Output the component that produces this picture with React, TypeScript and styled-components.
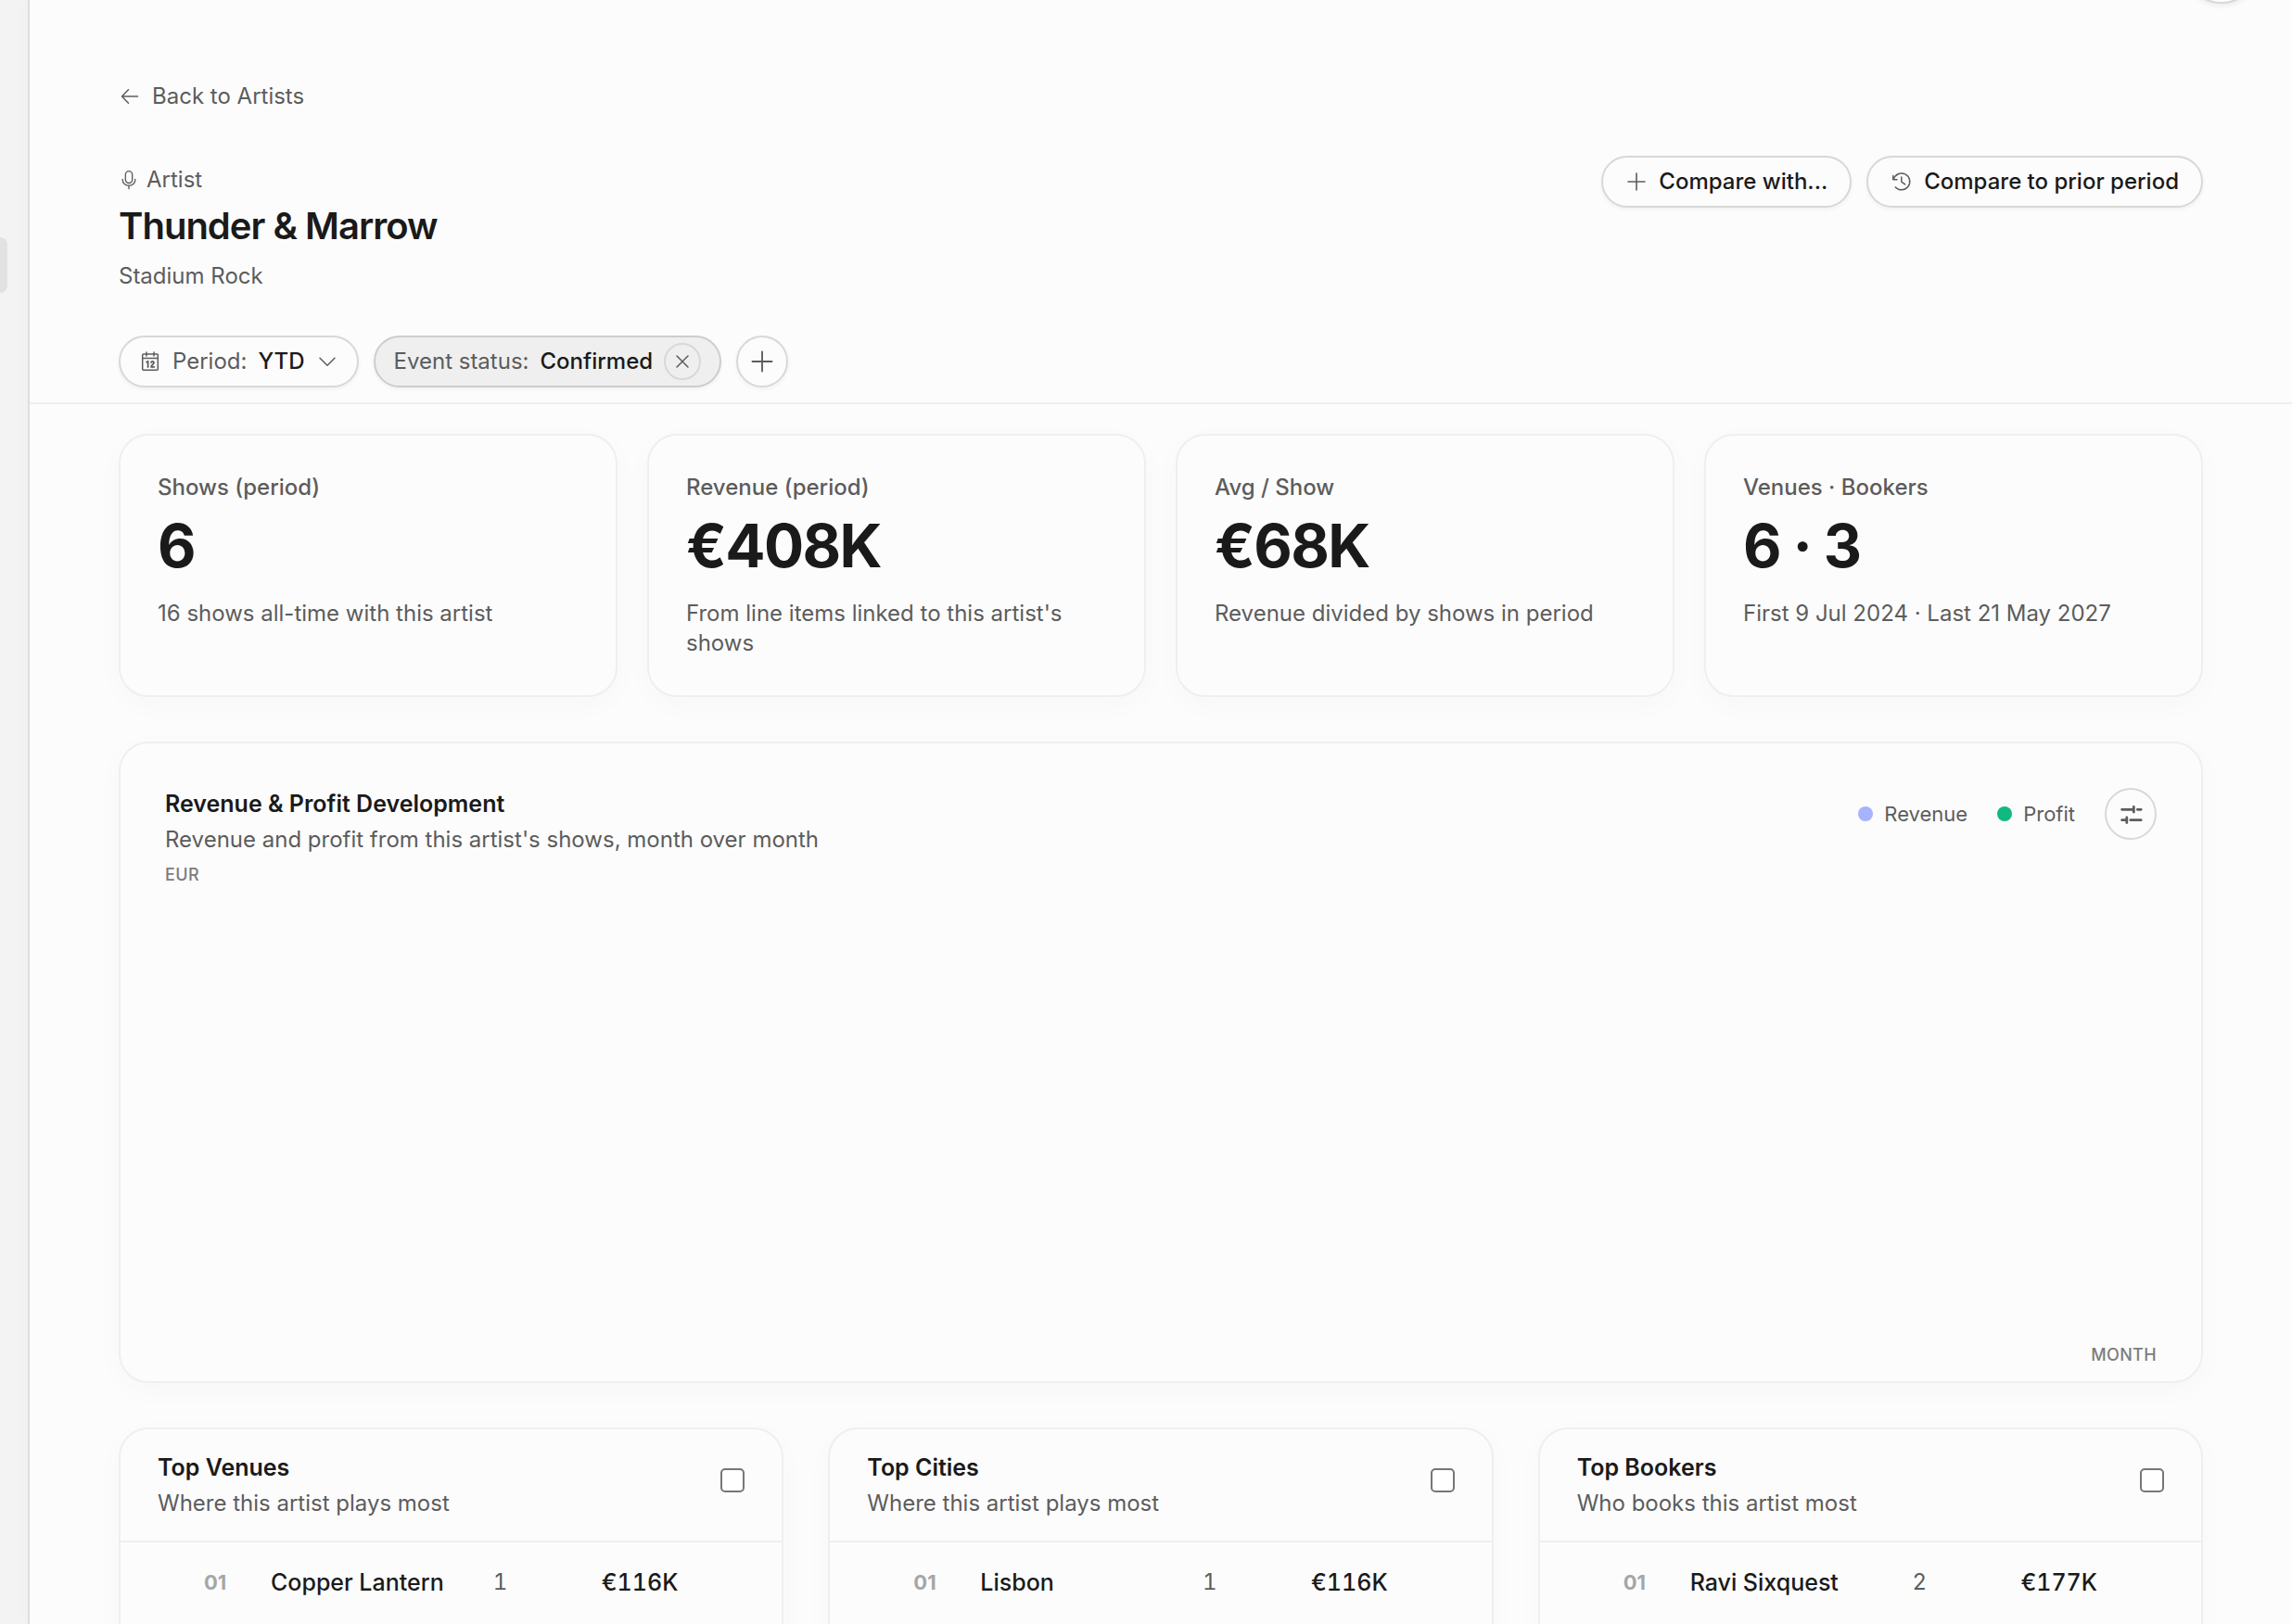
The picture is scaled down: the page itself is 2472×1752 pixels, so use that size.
import React, { useState } from "react";
import styled, { createGlobalStyle } from "styled-components";

const c = {
  bg: "#fcfcfc",
  side: "#f3f3f3",
  ink: "#1a1a1a",
  muted: "#5c5c5c",
  faint: "#7c7c7c",
  rank: "#a6a6a6",
  line: "#efefef",
  control: "#d8d8d8",
};

const GlobalStyle = createGlobalStyle`
  *, *::before, *::after { box-sizing: border-box; }
  body { margin: 0; background: ${c.bg}; }
  body, button, input { font-family: Inter, "Liberation Sans", sans-serif; }
  h1, h2, p { margin: 0; }
  svg { overflow: visible; }
`;

const Shell = styled.div`
  display: flex;
  height: 100vh;
  overflow: hidden;
  background: ${c.side};
  color: ${c.muted};
  font-size: 24px;
  line-height: 36px;
`;

const Sidebar = styled.nav`
  flex: 0 0 30px;
  padding-top: 256px;
`;

const ActiveItem = styled.a`
  display: block;
  width: 8px;
  height: 60px;
  border-radius: 0 16px 16px 0;
  background: #e2e2e2;
`;

const Main = styled.main`
  position: relative;
  flex: 1;
  min-width: 0;
  border-left: 2px solid #dedede;
  background: ${c.bg};
  box-shadow: 0 0 24px rgba(0, 0, 0, 0.02);
`;

const FloatingButton = styled.button`
  position: absolute;
  top: -76px;
  right: 36px;
  width: 80px;
  height: 80px;
  border: 2px solid ${c.control};
  border-radius: 50%;
  background: #fff;
  box-shadow: 0 2px 6px rgba(0, 0, 0, 0.08);
`;

const Header = styled.header`
  display: flex;
  flex-direction: column;
  gap: 46px;
  padding: 86px 96px 16px;
  border-bottom: 2px solid ${c.line};
`;

const BackLink = styled.a`
  display: inline-flex;
  align-items: center;
  align-self: flex-start;
  gap: 12px;
  color: ${c.muted};
  text-decoration: none;
`;

const TitleRow = styled.div`
  display: flex;
  justify-content: space-between;
  align-items: flex-start;
`;

const TitleBlock = styled.div`
  padding-top: 8px;
`;

const Kind = styled.p`
  display: flex;
  align-items: center;
  gap: 8px;
`;

const Title = styled.h1`
  margin: 8px 0 12px;
  color: ${c.ink};
  font-size: 40px;
  font-weight: 600;
  line-height: 48px;
  letter-spacing: -0.025em;
`;

const Actions = styled.div`
  display: flex;
  gap: 16px;
`;

const Filters = styled(Actions)``;

const Pill = styled.button<{ $pad?: number }>`
  display: inline-flex;
  align-items: center;
  gap: 12px;
  height: 56px;
  padding: 0 ${(p) => p.$pad ?? 20}px;
  border: 2px solid ${c.control};
  border-radius: 28px;
  background: ${c.bg};
  box-shadow: 0 2px 4px rgba(0, 0, 0, 0.05);
  color: ${c.muted};
  font-size: 24px;
  line-height: 36px;
  white-space: nowrap;
  cursor: pointer;
`;

const ActiveFilter = styled.div`
  display: inline-flex;
  align-items: center;
  gap: 12px;
  height: 56px;
  padding: 0 20px;
  border: 2px solid #cdcdcd;
  border-radius: 28px;
  background: #efefef;
  box-shadow: 0 2px 4px rgba(0, 0, 0, 0.05);
  white-space: nowrap;
`;

const Strong = styled.span`
  color: ${c.ink};
  font-weight: 500;
`;

const RoundButton = styled.button<{ $size: number; $raised?: boolean }>`
  display: grid;
  place-items: center;
  flex: none;
  width: ${(p) => p.$size}px;
  height: ${(p) => p.$size}px;
  padding: 0;
  border: 2px solid ${c.control};
  border-radius: 50%;
  background: transparent;
  box-shadow: ${(p) => (p.$raised ? "0 2px 4px rgba(0, 0, 0, 0.05)" : "none")};
  color: ${c.muted};
  cursor: pointer;
`;

const Content = styled.div`
  display: flex;
  flex-direction: column;
  gap: 48px;
  padding: 32px 96px 96px;
`;

const Grid = styled.div<{ $cols: number; $gap: number }>`
  display: grid;
  grid-template-columns: repeat(${(p) => p.$cols}, minmax(0, 1fr));
  gap: ${(p) => p.$gap}px;
`;

const Card = styled.section`
  border: 2px solid ${c.line};
  border-radius: 32px;
  background: ${c.bg};
  box-shadow: 0 8px 32px rgba(0, 0, 0, 0.025);
`;

const StatCard = styled(Card)`
  padding: 40px;
`;

const StatLabel = styled.h2`
  font-size: 24px;
  font-weight: 500;
  line-height: 32px;
`;

const StatValue = styled.p`
  margin: 14px 0 24px;
  color: ${c.ink};
  font-size: 64px;
  font-weight: 700;
  line-height: 66px;
  letter-spacing: -0.025em;
`;

const StatNote = styled.p`
  line-height: 32px;
`;

const ChartCard = styled(Card)`
  padding: 48px 48px 16px;
`;

const ListCard = styled(Card)`
  padding-bottom: 40px;
`;

const ChartHead = styled.div`
  display: flex;
  justify-content: space-between;
  align-items: flex-start;
`;

const CardTitle = styled.h2`
  color: ${c.ink};
  font-size: 25px;
  font-weight: 600;
  line-height: 34px;
`;

const CardNote = styled.p`
  margin-top: 4px;
  line-height: 36px;
`;

const Legend = styled.div`
  display: flex;
  align-items: center;
  gap: 32px;
  font-size: 22px;
`;

const LegendItem = styled.span`
  display: flex;
  align-items: center;
  gap: 12px;
`;

const Dot = styled.span<{ $color: string }>`
  width: 16px;
  height: 16px;
  border-radius: 50%;
  background: ${(p) => p.$color};
`;

const AxisLabel = styled.p<{ $end?: boolean }>`
  color: ${c.faint};
  font-size: 18px;
  font-weight: 500;
  line-height: 24px;
  letter-spacing: 0.02em;
  text-align: ${(p) => (p.$end ? "right" : "left")};
`;

const Plot = styled.div`
  height: 494px;
`;

const ChartBody = styled.div`
  margin-top: 8px;
`;

const ListHead = styled.div`
  display: flex;
  justify-content: space-between;
  align-items: flex-start;
  padding: 24px 40px 22px;
  border-bottom: 2px solid ${c.line};
`;

const Check = styled.input`
  appearance: none;
  width: 26px;
  height: 26px;
  margin: 18px 0 0;
  border: 2px solid #767676;
  border-radius: 5px;
  background: #fff;
  &:checked { background: #767676; }
`;

const Table = styled.table`
  width: 100%;
  border-collapse: collapse;
  table-layout: fixed;
  line-height: 36px;
`;

const Cell = styled.td<{ $w?: number }>`
  width: ${(p) => (p.$w ? `${p.$w}px` : "auto")};
  padding: 25px 0;
  white-space: nowrap;
`;

const Rank = styled(Cell)`
  padding-left: 90px;
  color: ${c.rank};
  font-size: 22px;
  font-weight: 700;
`;

const Name = styled(Cell)`
  color: ${c.ink};
  font-size: 25px;
  font-weight: 500;
`;

const Count = styled(Cell)`
  text-align: right;
  font-variant-numeric: tabular-nums;
`;

const Amount = styled(Cell)`
  padding-right: 112px;
  color: ${c.ink};
  font-size: 25px;
  font-weight: 500;
  text-align: right;
  font-variant-numeric: tabular-nums;
`;

const Svg = ({ size = 24, width = 1.5, children }: { size?: number; width?: number; children: React.ReactNode }) => (
  <svg width={size} height={size} viewBox="0 0 24 24" fill="none" stroke="currentColor" strokeWidth={width} strokeLinecap="round" strokeLinejoin="round" aria-hidden="true">
    {children}
  </svg>
);

const ArrowLeft = () => <Svg><path d="M20.5 12H3.5M10.5 4.8 3.5 12l7 7.2" /></Svg>;
const Mic = () => (
  <Svg size={22}>
    <rect x="8" y="1.8" width="8" height="14" rx="4" />
    <path d="M4.6 11.5v.8a7.4 6.4 0 0 0 14.8 0v-.8M12 18.7v3.6" />
  </Svg>
);
const Calendar = () => (
  <Svg>
    <rect x="3.7" y="4" width="16.6" height="17.2" rx="1" />
    <path d="M3.7 8.5h16.6M8 2v4M16 2v4" />
    <path strokeWidth="1.8" d="M8.2 12.6l1.4-.8v6.200M13 13c.4-1.600 3-1.400 3 .3 0 1.400-3 3-3 4.500h3.200" />
  </Svg>
);
const ChevronDown = () => <Svg><path d="m4 8.200 8 8 8-8" /></Svg>;
const Plus = ({ size = 24 }: { size?: number }) => <Svg size={size} width={1.6}><path d="M12 3v18M3 12h18" /></Svg>;
const Close = () => <Svg><path d="m6 6 12 12M18 6 6 18" /></Svg>;
const History = () => (
  <Svg>
    <path d="M2.800 5.500v4.300H7M3.300 9.400a8.900 8.900 0 1 1 2 8.500" />
    <path d="M11.800 7v5.200l3.800 2.700" />
  </Svg>
);
const Sliders = () => (
  <Svg width={2.8}>
    <path d="M2.600 7.300h12.700M15.300 4.500v5.500M19.300 7.300h3.900M2.600 18.700h5.200M7.800 16v5.500M11.800 18.700h11.400" />
  </Svg>
);

const stats = [
  { label: "Shows (period)", value: "6", note: "16 shows all-time with this artist" },
  { label: "Revenue (period)", value: "€408K", note: "From line items linked to this artist's shows" },
  { label: "Avg / Show", value: "€68K", note: "Revenue divided by shows in period" },
  { label: "Venues · Bookers", value: "6 · 3", note: "First 9 Jul 2024 · Last 21 May 2027" },
];

const lists = [
  { title: "Top Venues", note: "Where this artist plays most", rows: [["01", "Copper Lantern", "1", "€116K"]] },
  { title: "Top Cities", note: "Where this artist plays most", rows: [["01", "Lisbon", "1", "€116K"]] },
  { title: "Top Bookers", note: "Who books this artist most", rows: [["01", "Ravi Sixquest", "2", "€177K"]] },
];

function TopList({ title, note, rows }: (typeof lists)[number]) {
  const [on, setOn] = useState(false);
  return (
    <ListCard>
      <ListHead>
        <div>
          <CardTitle>{title}</CardTitle>
          <CardNote>{note}</CardNote>
        </div>
        <Check type="checkbox" aria-label={title} checked={on} onChange={() => setOn(!on)} />
      </ListHead>
      <Table>
        <tbody>
          {rows.map(([rank, name, count, amount]) => (
            <tr key={rank}>
              <Rank $w={162}>{rank}</Rank>
              <Name>{name}</Name>
              <Count $w={48}>{count}</Count>
              <Amount $w={296}>{amount}</Amount>
            </tr>
          ))}
        </tbody>
      </Table>
    </ListCard>
  );
}

export default function App() {
  return (
    <>
      <GlobalStyle />
      <Shell>
        <Sidebar aria-label="Sections">
          <ActiveItem href="#artists" aria-label="Artists" />
        </Sidebar>
        <Main>
          <FloatingButton type="button" aria-label="Account" />
          <Header>
            <BackLink href="#artists"><ArrowLeft />Back to Artists</BackLink>
            <TitleRow>
              <TitleBlock>
                <Kind><Mic />Artist</Kind>
                <Title>Thunder &amp; Marrow</Title>
                <p>Stadium Rock</p>
              </TitleBlock>
              <Actions>
                <Pill type="button" $pad={24}><Plus /><Strong>Compare with...</Strong></Pill>
                <Pill type="button" $pad={24}><History /><Strong>Compare to prior period</Strong></Pill>
              </Actions>
            </TitleRow>
            <Filters>
              <Pill type="button"><Calendar /><span>Period:</span><Strong>YTD</Strong><ChevronDown /></Pill>
              <ActiveFilter>
                <span>Event status:</span>
                <Strong>Confirmed</Strong>
                <RoundButton type="button" $size={40} aria-label="Remove filter"><Close /></RoundButton>
              </ActiveFilter>
              <RoundButton type="button" $size={56} $raised aria-label="Add filter"><Plus size={28} /></RoundButton>
            </Filters>
          </Header>
          <Content>
            <Grid $cols={4} $gap={32}>
              {stats.map((s) => (
                <StatCard key={s.label}>
                  <StatLabel>{s.label}</StatLabel>
                  <StatValue>{s.value}</StatValue>
                  <StatNote>{s.note}</StatNote>
                </StatCard>
              ))}
            </Grid>
            <ChartCard>
              <ChartHead>
                <div>
                  <CardTitle>Revenue &amp; Profit Development</CardTitle>
                  <CardNote>Revenue and profit from this artist's shows, month over month</CardNote>
                </div>
                <Legend>
                  <LegendItem><Dot $color="#a5b4fc" />Revenue</LegendItem>
                  <LegendItem><Dot $color="#10b981" />Profit</LegendItem>
                  <RoundButton type="button" $size={56} aria-label="Chart options"><Sliders /></RoundButton>
                </Legend>
              </ChartHead>
              <ChartBody>
                <AxisLabel>EUR</AxisLabel>
                <Plot />
                <AxisLabel $end>MONTH</AxisLabel>
              </ChartBody>
            </ChartCard>
            <Grid $cols={3} $gap={48}>
              {lists.map((l) => <TopList key={l.title} {...l} />)}
            </Grid>
          </Content>
        </Main>
      </Shell>
    </>
  );
}
